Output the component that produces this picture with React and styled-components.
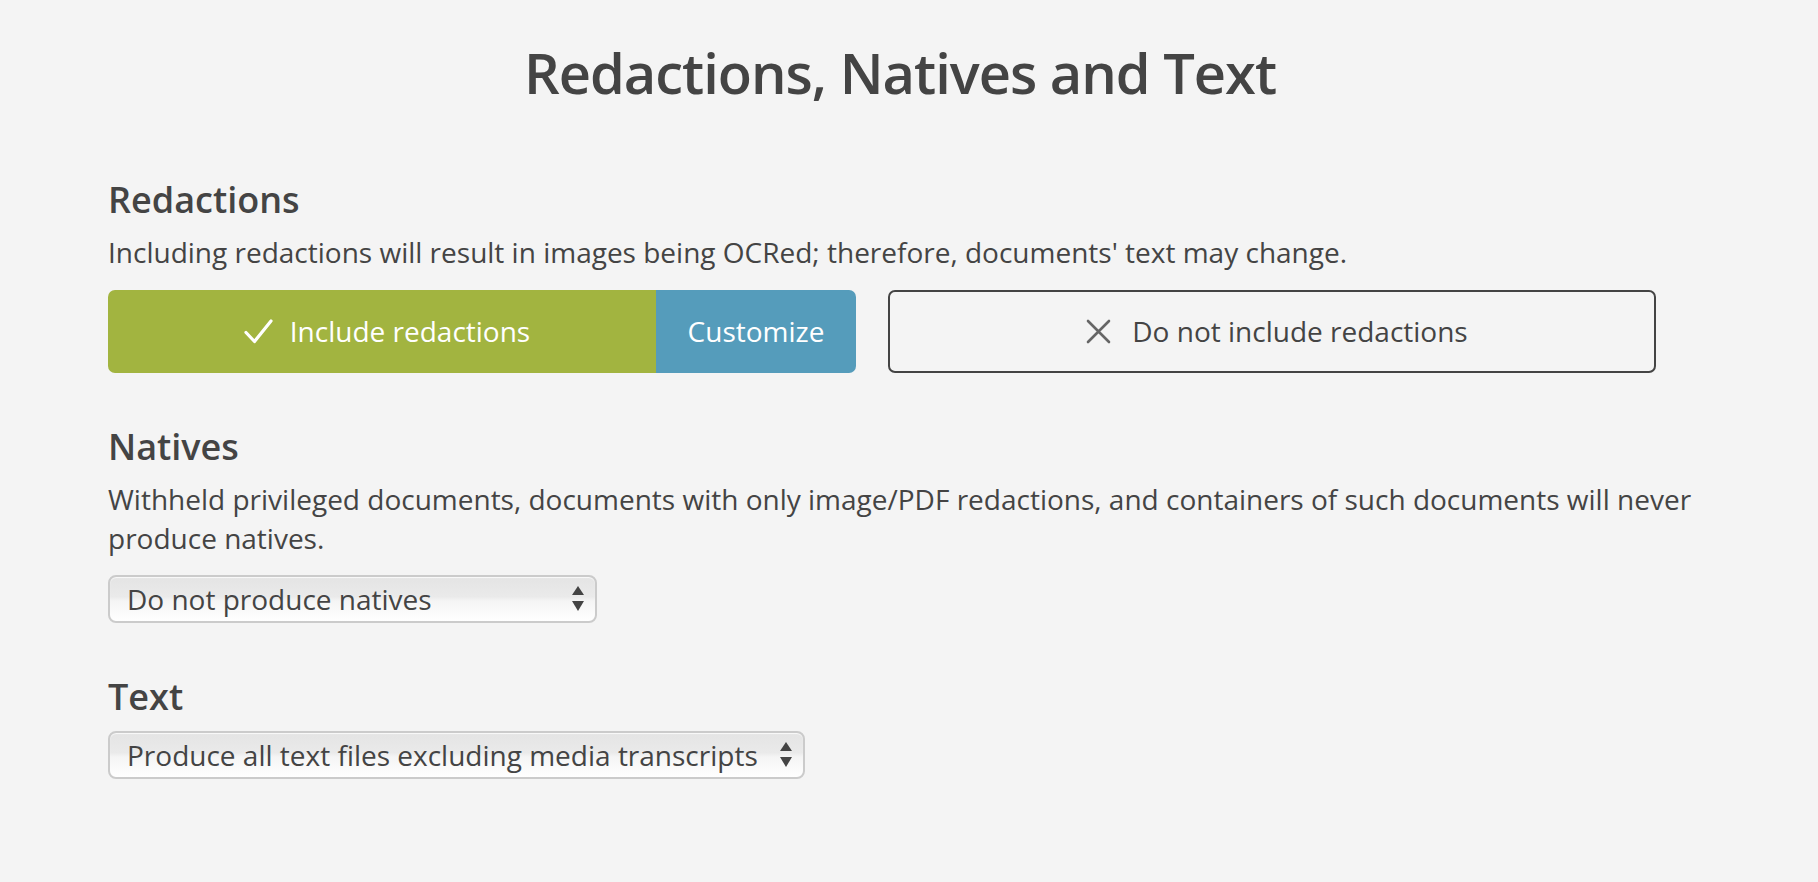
import React from 'react';
import styled, { createGlobalStyle } from 'styled-components';

const GlobalStyle = createGlobalStyle`
  body {
    margin: 0;
    background: #f4f4f4;
    font-family: 'Open Sans', 'Noto Sans', sans-serif;
    color: #444;
  }
`;

function CheckIcon() {
  return (
    <svg width="29" height="25" viewBox="0 0 29 25" fill="none">
      <path d="M2 13.5 L10.5 22.5 L27 2" stroke="#fff" strokeWidth="3.2" strokeLinecap="round" strokeLinejoin="round" />
    </svg>
  );
}

function CrossIcon() {
  return (
    <svg width="25" height="25" viewBox="0 0 25 25" fill="none">
      <path d="M2 2 L23 23 M23 2 L2 23" stroke="#666" strokeWidth="2.6" strokeLinecap="round" />
    </svg>
  );
}

function SelectArrows() {
  return (
    <svg width="12" height="25" viewBox="0 0 12 25">
      <path d="M6 0 L12 9 L0 9 Z" fill="#444" />
      <path d="M0 15 L12 15 L6 25 Z" fill="#444" />
    </svg>
  );
}

function Dropdown({ width, value, options }) {
  return (
    <SelectWrap $width={width}>
      <Select defaultValue={value}>
        {options.map((o) => (
          <option key={o}>{o}</option>
        ))}
      </Select>
      <ArrowBox>
        <SelectArrows />
      </ArrowBox>
    </SelectWrap>
  );
}

export default function App() {
  return (
    <>
      <GlobalStyle />
      <Page>
        <Title>Redactions, Natives and Text</Title>

        <Section>
          <SectionTitle>Redactions</SectionTitle>
          <Description>
            Including redactions will result in images being OCRed; therefore, documents' text may change.
          </Description>
          <ButtonRow>
            <SplitButton>
              <IncludeButton>
                <CheckIcon />
                Include redactions
              </IncludeButton>
              <CustomizeButton>Customize</CustomizeButton>
            </SplitButton>
            <ExcludeButton>
              <CrossIcon />
              Do not include redactions
            </ExcludeButton>
          </ButtonRow>
        </Section>

        <Section>
          <SectionTitle>Natives</SectionTitle>
          <Description>
            Withheld privileged documents, documents with only image/PDF redactions, and containers of such documents will never produce natives.
          </Description>
          <Dropdown
            width={489}
            value="Do not produce natives"
            options={['Do not produce natives', 'Produce natives for all documents']}
          />
        </Section>

        <Section>
          <SectionTitle $tight>Text</SectionTitle>
          <Dropdown
            width={697}
            value="Produce all text files excluding media transcripts"
            options={['Produce all text files excluding media transcripts', 'Produce all text files', 'Do not produce text']}
          />
        </Section>
      </Page>
    </>
  );
}

const Page = styled.main`
  width: 1602px;
  margin: 0 auto;
  padding-top: 39px;
`;

const Title = styled.h1`
  margin: 0 0 72px;
  padding-right: 18px;
  font-size: 56px;
  font-weight: 600;
  line-height: 1.2;
  letter-spacing: -1px;
  text-align: center;
  color: #444;
`;

const Section = styled.section`
  display: flex;
  flex-direction: column;
  align-items: flex-start;
  & + & {
    margin-top: 52px;
  }
`;

const SectionTitle = styled.h2`
  margin: 0 0 ${(p) => (p.$tight ? '13px' : '12px')};
  font-size: 36px;
  font-weight: 600;
  line-height: 1.2;
  color: #444;
`;

const Description = styled.p`
  margin: 0 0 17px;
  font-size: 28px;
  line-height: 1.4;
  color: #444;
`;

const ButtonRow = styled.div`
  display: flex;
  gap: 32px;
  height: 83px;
`;

const SplitButton = styled.div`
  display: flex;
  width: 748px;
  border-radius: 7px;
  overflow: hidden;
`;

const BaseButton = styled.button`
  display: flex;
  align-items: center;
  justify-content: center;
  border: none;
  margin: 0;
  padding: 0;
  font-family: 'Open Sans', sans-serif;
  font-size: 28px;
  cursor: pointer;
`;

const IncludeButton = styled(BaseButton)`
  flex: 1;
  gap: 17px;
  padding-left: 10px;
  background: #a2b440;
  color: #fff;
`;

const CustomizeButton = styled(BaseButton)`
  width: 200px;
  background: #559cbb;
  color: #fff;
`;

const ExcludeButton = styled(BaseButton)`
  width: 768px;
  gap: 21px;
  padding-left: 10px;
  background: transparent;
  border: 2px solid #444;
  border-radius: 7px;
  color: #444;
`;

const SelectWrap = styled.div`
  position: relative;
  width: ${(p) => p.$width}px;
`;

const Select = styled.select`
  appearance: none;
  -webkit-appearance: none;
  width: 100%;
  height: 48px;
  margin: 0;
  padding: 0 40px 0 17px;
  border: 2px solid #cbcbcb;
  border-radius: 8px;
  background: linear-gradient(to bottom, #e4e4e4 0%, #eaeaea 45%, #f5f5f5 55%, #ffffff 100%);
  box-shadow: inset 0 1px 1px rgba(255, 255, 255, 0.8);
  font-family: 'Open Sans', sans-serif;
  font-size: 28px;
  color: #444;
  outline: none;
`;

const ArrowBox = styled.span`
  position: absolute;
  right: 13px;
  top: 11px;
  pointer-events: none;
  display: flex;
`;
